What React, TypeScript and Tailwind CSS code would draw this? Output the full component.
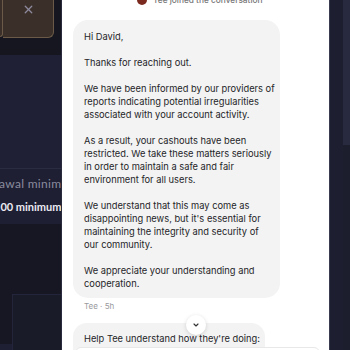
import { ChevronDown, X } from "lucide-react";

const paragraphs = [
  ["Hi David,"],
  ["Thanks for reaching out."],
  [
    "We have been informed by our providers of",
    "reports indicating potential irregularities",
    "associated with your account activity.",
  ],
  [
    "As a result, your cashouts have been",
    "restricted. We take these matters seriously",
    "in order to maintain a safe and fair",
    "environment for all users.",
  ],
  [
    "We understand that this may come as",
    "disappointing news, but it's essential for",
    "maintaining the integrity and security of",
    "our community.",
  ],
  ["We appreciate your understanding and", "cooperation."],
];

export default function App() {
  return (
    <div className="flex h-[350px] w-[350px] overflow-hidden bg-[#1e1f33]">
      {/* background app, left part */}
      <div className="flex w-[62px] shrink-0 flex-col overflow-hidden border-r border-[#2a2b3d] font-['Lato',sans-serif]">
        <div className="flex h-[55px] items-start bg-[#15161f]">
          <div className="h-[37px] w-[3px] rounded-br-md border-r border-b border-[#6b5a47] bg-[#3a2f29]"></div>
          <div className="flex h-[38px] w-[51px] justify-center rounded-br-md border-b border-r border-[#6b5a47] bg-[#3a2f29] pt-[3px]">
            <X className="h-[13px] w-[13px] text-[#8e8a9e]" strokeWidth={2.4} />
          </div>
        </div>
        <div className="h-[114px] border-b border-[#2a2c42] bg-[#1f2035]"></div>
        <div className="ml-[-1px] mt-[8px] whitespace-nowrap text-[12px] leading-[14px] tracking-[0.3px] text-[#8b8c9e]">awal minimum</div>
        <div className="ml-[-6px] mt-[9px] whitespace-nowrap text-[11px] leading-[14px] font-bold text-[#ecebf2]">100 minimum</div>
        <div className="mt-[10px] h-[120px] bg-[#161722]">
          <div className="ml-[12px] mt-[70px] h-[60px] border-l border-t border-[#23253a] bg-[#1a1b28]"></div>
        </div>
      </div>

      {/* chat panel */}
      <div className="flex w-[267px] shrink-0 flex-col bg-white font-['Inter',sans-serif] text-[#252528]">
        <div className="mt-[-6px] flex h-[12px] items-center gap-[6px] pl-[75px] text-[8.3px] text-[#777]">
          <div className="h-[10px] w-[10px] rounded-full bg-[#7a2a1e]"></div>
          <span className="font-medium">Tee joined the conversation</span>
        </div>
        <div className="ml-[11px] mt-[14px] w-[207px] rounded-[15px] bg-[#f3f3f3] px-[11px] pb-[8px] pt-[10px] text-[9.3px] leading-[13px]">
          {paragraphs.map((lines, i) => (
            <p key={i} className={i > 0 ? "mt-[13px]" : ""}>
              {lines.map((l, j) => (
                <span key={j} className="block whitespace-nowrap">{l}</span>
              ))}
            </p>
          ))}
        </div>
        <div className="ml-[22px] mt-[2px] text-[8px] leading-[12px] text-[#9a9a9e]">Tee · 5h</div>
        <div className="relative z-10 mt-[3px] flex justify-center">
          <div className="flex h-[20px] w-[20px] items-center justify-center rounded-full bg-white shadow-[0_1px_4px_rgba(0,0,0,0.15)]">
            <ChevronDown className="h-[8px] w-[8px] text-[#333]" strokeWidth={3.5} />
          </div>
        </div>
        <div className="ml-[11px] mt-[-12px] w-[192px] whitespace-nowrap rounded-t-[14px] bg-[#f3f3f3] px-[11px] pt-[9px] text-[9.3px] leading-[13px]">
          Help Tee understand how they're doing:
          <div className="ml-[-9px] mt-[2px] h-[10px] w-[245px] rounded-t-[6px] border border-[#e8e8e8] bg-white"></div>
        </div>
      </div>

      {/* background app, right part */}
      <div className="flex flex-1 bg-[#1c1d2d]">
        <div className="w-[1px] bg-[#3a3b4e]"></div>
        <div className="w-[13px] bg-[#1d1e30]"></div>
        <div className="h-[145px] flex-1 bg-[#282a40]"></div>
      </div>
    </div>
  );
}
